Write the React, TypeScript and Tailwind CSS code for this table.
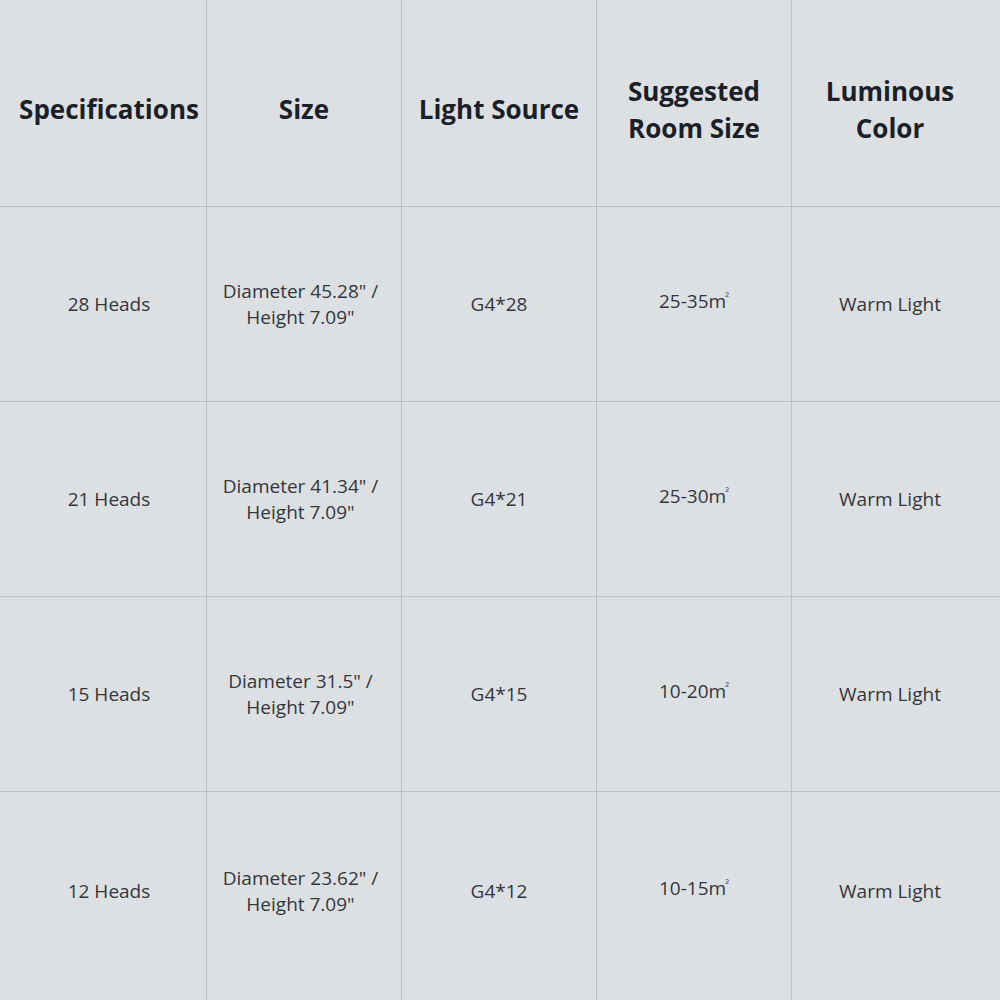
import React from 'react';

const rows = [
  { spec: '28 Heads', size: ['Diameter 45.28" /', 'Height 7.09"'], source: 'G4*28', room: '25-35' },
  { spec: '21 Heads', size: ['Diameter 41.34" /', 'Height 7.09"'], source: 'G4*21', room: '25-30' },
  { spec: '15 Heads', size: ['Diameter 31.5" /', 'Height 7.09"'], source: 'G4*15', room: '10-20' },
  { spec: '12 Heads', size: ['Diameter 23.62" /', 'Height 7.09"'], source: 'G4*12', room: '10-15' },
];

const headers = [['Specifications'], ['Size'], ['Light Source'], ['Suggested', 'Room Size'], ['Luminous', 'Color']];
const colPad = ['pl-3', '', '', '', 'pr-3'];
const bodyPad = ['pl-3', 'pr-[7px]', '', '', 'pr-3'];

const App: React.FC = () => {
  return (
    <div className="w-[1000px] h-[1000px] bg-[#dde0e3] grid grid-cols-[207px_195px_195px_195px_1fr] grid-rows-[207px_195px_195px_195px_1fr] overflow-hidden">
      {headers.map((h, i) => (
        <div
          key={i}
          className={`flex flex-col items-center justify-center pt-[13px] border-b border-[#bcc0c4] ${i < 4 ? 'border-r' : ''} ${colPad[i]} font-['Open_Sans',sans-serif] font-bold text-[26px] leading-[37px] text-[#1b1f27] whitespace-nowrap`}
        >
          {h.map((l) => (
            <span key={l}>{l}</span>
          ))}
        </div>
      ))}
      {rows.map((r, ri) => {
        const cells: React.ReactNode[][] = [
          [r.spec],
          r.size,
          [r.source],
          [
            <span key="room" className="inline-block -translate-y-[5px]">
              {r.room}m<span className="text-[11px] align-[7px] -ml-[1px]">²</span>
            </span>,
          ],
          ['Warm Light'],
        ];
        return cells.map((c, ci) => (
          <div
            key={`${ri}-${ci}`}
            className={`flex flex-col items-center justify-center ${ri < 3 ? 'border-b' : 'pb-[10px]'} ${ci < 4 ? 'border-r' : ''} ${bodyPad[ci]} border-[#bcc0c4] font-['Open_Sans',sans-serif] text-[19px] leading-[26px] text-[#33363b] whitespace-nowrap`}
          >
            {c.map((l, li) => (
              <span key={li}>{l}</span>
            ))}
          </div>
        ));
      })}
    </div>
  );
};

export default App;
